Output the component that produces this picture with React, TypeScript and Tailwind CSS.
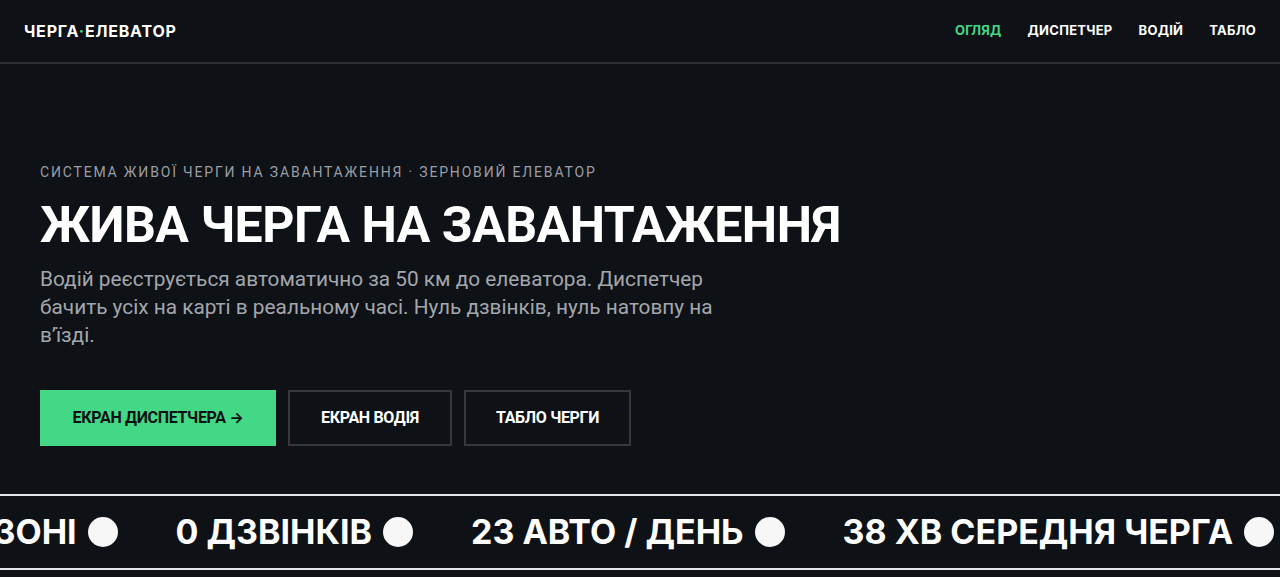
import React from 'react';

const navItems = [
  { label: 'Огляд', active: true },
  { label: 'Диспетчер' },
  { label: 'Водій' },
  { label: 'Табло' },
];

const tickerItems = [
  '12 авто в зоні',
  '0 дзвінків',
  '23 авто / день',
  '38 хв середня черга',
  '12 авто в зоні',
  '0 дзвінків',
];

const Header: React.FC = () => (
  <header className="flex h-16 items-center justify-between border-b-2 border-[#2c2f34] px-6">
    <div className="text-[16px] font-bold uppercase tracking-[0.05em] text-white">
      Черга<span className="text-[#43d886]">·</span>Елеватор
    </div>
    <nav className="flex items-center gap-[26px]">
      {navItems.map((item) => (
        <a
          key={item.label}
          href="#"
          className={`text-[13px] font-bold uppercase tracking-[0.02em] ${
            item.active ? 'text-[#43d886]' : 'text-white'
          }`}
        >
          {item.label}
        </a>
      ))}
    </nav>
  </header>
);

const Hero: React.FC = () => (
  <section className="px-10 pt-[98px] font-['Roboto',sans-serif]">
    <p className="text-[14px] uppercase leading-5 tracking-[0.13em] text-[#9a9ea5]">
      Система живої черги на завантаження · зерновий елеватор
    </p>
    <h1 className="mt-[16px] text-[50px] font-bold uppercase leading-[1.1] tracking-[-0.01em] text-white">
      Жива черга на завантаження
    </h1>
    <p className="mt-[12px] max-w-[700px] text-[20.8px] leading-7 text-[#a3a7ad]">
      Водій реєструється автоматично за 50 км до елеватора. Диспетчер бачить усіх на карті в
      реальному часі. Нуль дзвінків, нуль натовпу на в’їзді.
    </p>
    <div className="mt-[41px] flex gap-3">
      <button className="h-14 w-[236px] bg-[#43d886] text-[16px] font-bold uppercase tracking-[-0.02em] text-[#0d1013]">
        Екран диспетчера <span className="font-['Inter',sans-serif] text-[15px]">→</span>
      </button>
      <button className="h-14 w-[164px] border-2 border-[#34373c] text-[16px] font-bold uppercase tracking-[-0.02em] text-white">
        Екран водія
      </button>
      <button className="h-14 w-[167px] border-2 border-[#34373c] text-[16px] font-bold uppercase tracking-[-0.02em] text-white">
        Табло черги
      </button>
    </div>
  </section>
);

const Ticker: React.FC = () => (
  <div className="mt-[48px] overflow-hidden border-y-2 border-[#e6e7e9] py-[14px]">
    <div className="-ml-[183px] flex w-max items-center gap-[58px]">
      {tickerItems.map((t, i) => (
        <div key={i} className="flex items-center gap-[11px]">
          <span className="whitespace-nowrap text-[34px] font-bold uppercase leading-[44px] text-white">
            {t}
          </span>
          <span className="h-[30px] w-[30px] rounded-full bg-[#f7f7f8]" />
        </div>
      ))}
    </div>
  </div>
);

export default function App() {
  return (
    <div
      className="min-h-screen bg-[#0e1115]"
      style={{ fontFamily: 'Inter, "Noto Sans", sans-serif' }}
    >
      <Header />
      <Hero />
      <Ticker />
    </div>
  );
}
